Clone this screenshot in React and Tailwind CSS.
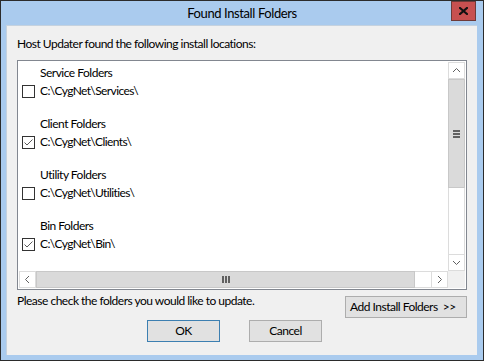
const FOLDERS = [
  { label: 'Service Folders', path: 'C:\\CygNet\\Services\\', checked: false },
  { label: 'Client Folders', path: 'C:\\CygNet\\Clients\\', checked: true },
  { label: 'Utility Folders', path: 'C:\\CygNet\\Utilities\\', checked: false },
  { label: 'Bin Folders', path: 'C:\\CygNet\\Bin\\', checked: true },
]

function Chevron({ dir }) {
  const pts = {
    up: '1,5 4.5,1.5 8,5',
    down: '1,2 4.5,5.5 8,2',
    left: '5,1 1.5,4.5 5,8',
    right: '2,1 5.5,4.5 2,8',
  }[dir]
  const horiz = dir === 'left' || dir === 'right'
  return (
    <svg width={horiz ? 7 : 9} height={horiz ? 9 : 7} viewBox={horiz ? '0 0 7 9' : '0 0 9 7'}>
      <polyline points={pts} fill="none" stroke="#606060" strokeWidth="1" />
    </svg>
  )
}

function Checkbox({ checked }) {
  return (
    <div className="w-[13px] h-[13px] border border-[#333333] bg-white flex items-center justify-center shrink-0">
      {checked && (
        <svg width="11" height="11" viewBox="0 0 11 11">
          <polyline points="1.5,5.5 4,8 9.5,2.5" fill="none" stroke="#5a5a5a" strokeWidth="1" />
        </svg>
      )}
    </div>
  )
}

function VScrollBar() {
  return (
    <div className="w-[17px] flex flex-col bg-white">
      <div className="h-[17px] border border-[#dcdcdc] flex items-center justify-center">
        <Chevron dir="up" />
      </div>
      <div className="h-[109px] bg-[#dadada] border border-[#c8c8c8] flex flex-col items-center justify-center gap-[1px]">
        <div className="w-[7px] h-[2px] bg-[#606060]" />
        <div className="w-[7px] h-[2px] bg-[#606060]" />
        <div className="w-[7px] h-[2px] bg-[#606060]" />
      </div>
      <div className="flex-1 border-x border-[#dcdcdc]" />
      <div className="h-[17px] border border-[#dcdcdc] flex items-center justify-center">
        <Chevron dir="down" />
      </div>
    </div>
  )
}

function HScrollBar() {
  return (
    <div className="h-[17px] flex-1 flex bg-white">
      <div className="w-[17px] border border-[#dcdcdc] flex items-center justify-center">
        <Chevron dir="left" />
      </div>
      <div className="w-[379px] bg-[#dadada] border border-[#c8c8c8] flex items-center justify-center gap-[1px]">
        <div className="w-[2px] h-[7px] bg-[#606060]" />
        <div className="w-[2px] h-[7px] bg-[#606060]" />
        <div className="w-[2px] h-[7px] bg-[#606060]" />
      </div>
      <div className="flex-1 border-y border-[#dcdcdc]" />
      <div className="w-[17px] border border-[#dcdcdc] flex items-center justify-center">
        <Chevron dir="right" />
      </div>
    </div>
  )
}

export default function App() {
  return (
    <div className="w-[484px] h-[361px] border border-[#2b2b2b] bg-[#aacbee] flex flex-col font-['Lato','Noto_Sans',sans-serif] text-black">
      <div className="h-[24px] grid grid-cols-[1fr_auto_1fr] items-center">
        <div />
        <div className="text-[13px] leading-[16px] tracking-[-0.4px] text-black">Found Install Folders</div>
        <div className="justify-self-end self-start mr-[7px] w-[25px] h-[20px] bg-[#c75050] border border-[#6e3a38] flex items-center justify-center">
          <svg width="9" height="8" viewBox="0 0 9 8">
            <path d="M1 1 L8 7 M8 1 L1 7" stroke="#111" strokeWidth="2.2" strokeLinecap="square" />
          </svg>
        </div>
      </div>

      <div className="ml-[5px] mr-[6px] h-[330px] bg-[#f0f0f0] border-t border-l border-[#c5d2df] pl-[10px] pr-[10px] text-[12px] tracking-[-0.5px]">
        <div className="pt-[10px] mb-[8px] leading-[16px]">Host Updater found the following install locations:</div>

        <div className="w-[450px] h-[230px] border border-[#828790] bg-white p-[1px] flex flex-col">
          <div className="flex-1 flex">
            <div className="flex-1 pt-[2px] flex flex-col gap-[15px]">
              {FOLDERS.map((f) => (
                <div key={f.label} className="flex flex-col">
                  <div className="h-[18px] leading-[18px] pl-[21px]">{f.label}</div>
                  <div className="h-[18px] flex items-center gap-[5px] pl-[3px]">
                    <Checkbox checked={f.checked} />
                    <span className="leading-[18px] tracking-[-0.6px]">{f.path}</span>
                  </div>
                </div>
              ))}
            </div>
            <VScrollBar />
          </div>
          <div className="flex">
            <HScrollBar />
            <div className="w-[17px] h-[17px] bg-[#f0f0f0]" />
          </div>
        </div>

        <div className="flex justify-between items-start">
          <div className="mt-[3px] leading-[16px] whitespace-nowrap">Please check the folders you would like to update.</div>
          <div className="mt-[6px] w-[122px] h-[22px] shrink-0 whitespace-nowrap bg-[#e1e1e1] border border-[#adadad] flex items-center pl-[4px]">
            Add Install Folders&nbsp;&nbsp;&gt;&gt;
          </div>
        </div>

        <div className="mt-[2px] ml-[130px] flex gap-[29px]">
          <div className="w-[73px] h-[22px] bg-[#e1e1e1] border border-[#3c7fb1] flex items-center justify-center">OK</div>
          <div className="w-[73px] h-[22px] bg-[#e1e1e1] border border-[#adadad] flex items-center justify-center">Cancel</div>
        </div>
      </div>
    </div>
  )
}
